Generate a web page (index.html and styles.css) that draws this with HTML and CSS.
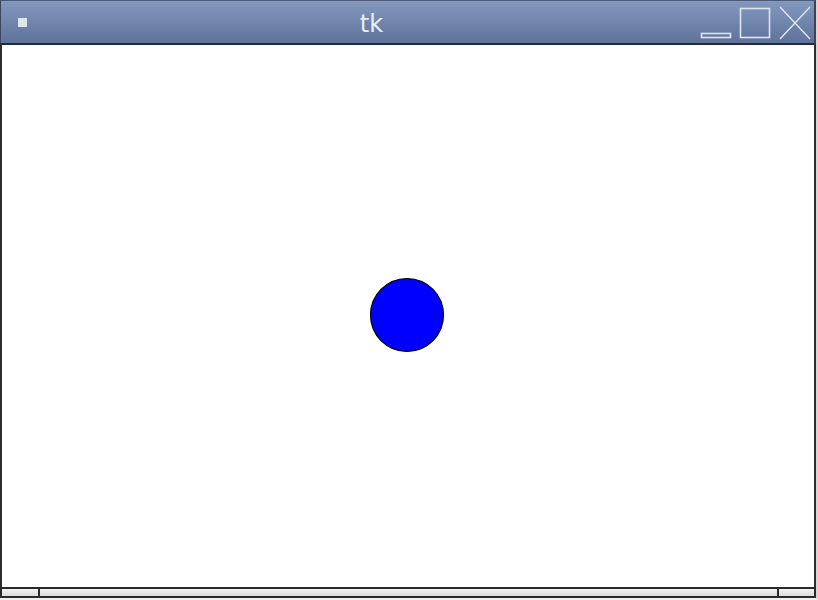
FILE: index.html
```html
<!DOCTYPE html>
<html>
<head>
<meta charset="utf-8">
<title>tk</title>
<link rel="stylesheet" href="styles.css">
</head>
<body>
<div class="window">
  <div class="titlebar">
    <div class="menu-btn"><span class="menu-dot"></span></div>
    <div class="title">tk</div>
    <div class="controls">
      <svg class="ctl ctl-min" width="32" height="40" viewBox="0 0 32 40"><rect x="1.5" y="32.5" width="29" height="4" fill="none" stroke="#dfe5f1" stroke-width="1.6"/></svg>
      <svg class="ctl" width="32" height="40" viewBox="0 0 32 40"><rect x="1.5" y="7.5" width="29" height="29" fill="none" stroke="#dfe5f1" stroke-width="1.6"/></svg>
      <svg class="ctl" width="34" height="40" viewBox="0 0 34 40"><path d="M2 6 L32 38 M32 6 L2 38" stroke="#dfe5f1" stroke-width="1.4" fill="none"/></svg>
    </div>
  </div>
  <div class="canvas">
    <svg class="ball" width="76" height="76" viewBox="0 0 76 76"><circle cx="38" cy="38" r="36.5" fill="#0000ff" stroke="#000" stroke-width="1.2"/></svg>
  </div>
  <div class="statusbar">
    <div class="seg seg-left"></div>
    <div class="seg seg-mid"></div>
    <div class="seg seg-right"></div>
  </div>
</div>
</body>
</html>
```
FILE: styles.css
```css
html, body {
  margin: 0;
  padding: 0;
  background: #ffffff;
}
body {
  width: 818px;
  height: 600px;
  overflow: hidden;
}
.window {
  width: 816px;
  height: 598px;
  display: flex;
  flex-direction: column;
  border-right: 2px solid #d6d6d6;
  border-bottom: 2px solid #f0f0f0;
}
.titlebar {
  display: flex;
  align-items: stretch;
  background: linear-gradient(#8498bd 0%, #7388af 45%, #5f7299 100%);
  border-top: 1px solid #4b5a78;
  border-left: 1px solid #3a465e;
  border-bottom: 2px solid #252b36;
  border-right: 2px solid #3a4458;
  box-sizing: border-box;
  height: 45px;
}
.menu-btn {
  width: 42px;
  display: flex;
  align-items: center;
  justify-content: center;
  padding-top: 1px;
}
.menu-dot {
  width: 9px;
  height: 9px;
  background: #dfe4f1;
}
.title {
  flex: 1;
  text-align: center;
  font-family: "DejaVu Sans", sans-serif;
  font-size: 24px;
  color: #e9edf5;
  line-height: 47px;
}
.controls {
  display: flex;
  align-items: flex-start;
  gap: 7px;
  padding-right: 2px;
}
.ctl {
  display: block;
}
.canvas {
  flex: 1;
  display: flex;
  align-items: center;
  justify-content: center;
  background: #ffffff;
  border-left: 2px solid #2e2e2e;
  border-right: 2px solid #2e2e2e;
  padding-right: 2px;
  padding-bottom: 2px;
}
.ball {
  display: block;
}
.statusbar {
  height: 11px;
  display: flex;
  border: 2px solid #2a2a2a;
  box-sizing: border-box;
  background: linear-gradient(#f2f2f2, #dcdcdc);
}
.seg {
  height: 100%;
}
.seg-left {
  width: 36px;
  border-right: 2px solid #2a2a2a;
}
.seg-mid {
  flex: 1;
  border-right: 2px solid #2a2a2a;
}
.seg-right {
  width: 35px;
}
```
